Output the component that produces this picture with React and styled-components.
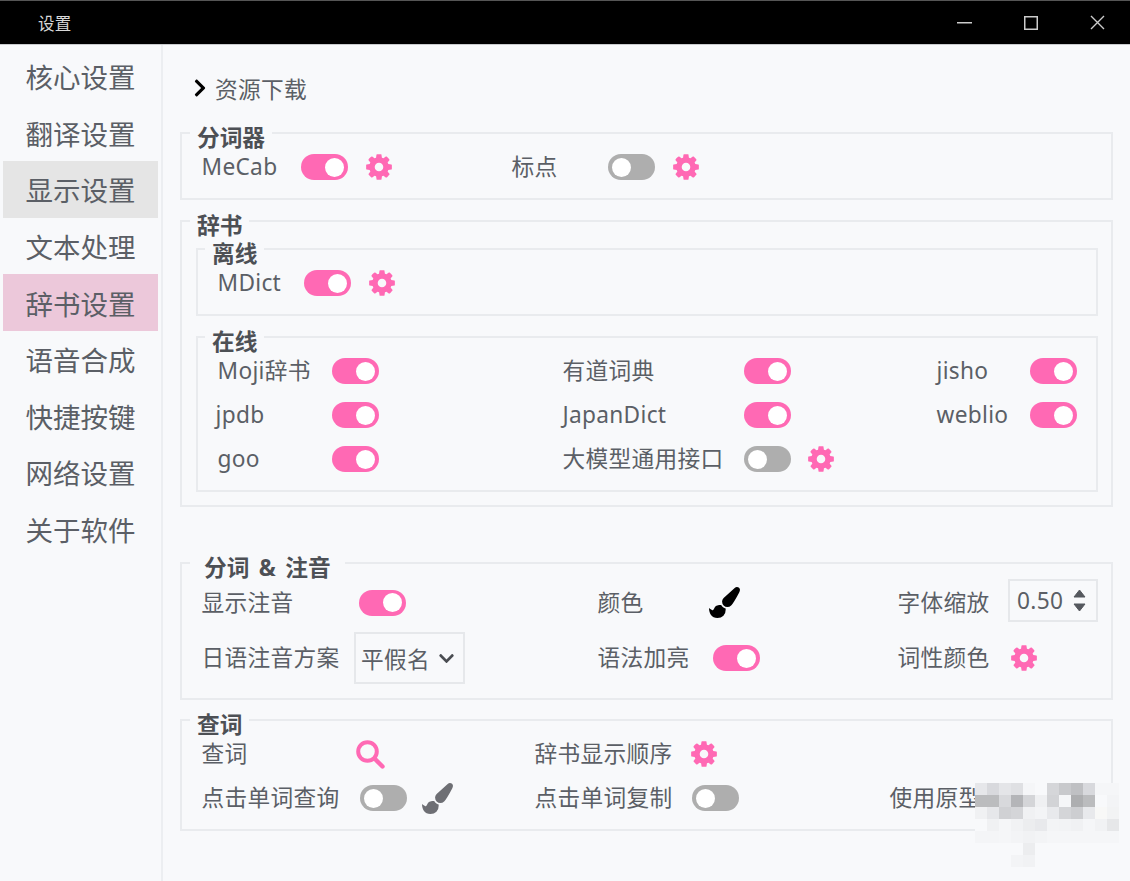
import React from "react";
import styled, { createGlobalStyle } from "styled-components";
import { FaChevronRight, FaChevronDown } from "react-icons/fa";

const Global = createGlobalStyle`
  html, body { margin: 0; padding: 0; background: #f8f9fb; }
  * { box-sizing: border-box; }
`;

const Window = styled.div`
  position: relative;
  width: 1130px;
  height: 881px;
  overflow: hidden;
  display: flex;
  flex-direction: column;
  background: #f8f9fb;
  color: #5b5f66;
  font-family: "Noto Sans", "Noto Sans CJK SC", sans-serif;
  font-size: 22.7px;
  letter-spacing: 0.3px;
`;

const TitleBar = styled.header`
  height: 45px;
  flex: none;
  display: flex;
  align-items: center;
  background: #000;
  border-top: 1px solid #555;
  border-bottom: 1px solid #c9cbce;
  padding-left: 38px;
  color: #d8d8d8;
  font-size: 16.5px;
`;

const TitleText = styled.span`
  flex: 1;
`;

const WinButton = styled.button`
  width: 66.5px;
  height: 42px;
  padding: 0 0 0 2px;
  border: 0;
  background: transparent;
  display: flex;
  align-items: center;
  justify-content: center;
  svg { display: block; }
`;

const Body = styled.div`
  flex: 1;
  display: flex;
  min-height: 0;
`;

const Sidebar = styled.nav`
  width: 163px;
  flex: none;
  padding: 3px 3px 0 3px;
  border-right: 2px solid #eceef1;
`;

const NavItem = styled.div`
  height: 56.6px;
  display: flex;
  align-items: center;
  justify-content: center;
  font-size: 27.5px;
  letter-spacing: 0;
  background: ${(p) => (p.$state === "hover" ? "#e5e5e5" : p.$state === "active" ? "#ecc8da" : "transparent")};
`;

const Content = styled.main`
  flex: 1;
  padding: 28px 17px 0 17px;
`;

const Download = styled.div`
  height: 30px;
  display: flex;
  align-items: center;
  gap: 5px;
  padding-left: 10px;
  margin-bottom: 20px;
  svg { color: #000; font-size: 20px; }
`;

const Group = styled.fieldset`
  margin: ${(p) => p.$mt ?? 0}px 0 0;
  padding: ${(p) => p.$pad || "8px 0 15px 20px"};
  border: 2px solid #e9ebee;
  min-width: 0;
`;

const Legend = styled.legend`
  margin-left: ${(p) => p.$ml ?? -12}px;
  padding: 0 ${(p) => p.$px ?? 7}px;
  line-height: 20px;
  height: 20px;
  font-weight: 700;
  letter-spacing: 0;
  color: #4d5055;
  transform: translateY(5px);
  white-space: nowrap;
  word-spacing: 3.5px;
`;

const Nested = styled(Group)`
  & + & { margin-top: 11px; }
`;

const Grid = styled.div`
  display: grid;
  grid-template-columns: ${(p) => p.$cols};
  grid-auto-rows: ${(p) => p.$rows || "32px"};
  grid-template-rows: ${(p) => p.$rows || "none"};
  row-gap: ${(p) => p.$gap ?? 12}px;
  align-items: center;
`;

const Label = styled.span`
  white-space: nowrap;
  margin-left: ${(p) => p.$ml ?? -0.5}px;
  line-height: 32px;
`;

const Toggle = styled.span`
  width: 47px;
  height: 26px;
  border-radius: 13px;
  display: flex;
  align-items: center;
  justify-content: ${(p) => (p.$on ? "flex-end" : "flex-start")};
  padding: 0 4px;
  margin-left: ${(p) => p.$ml ?? 0}px;
  background: ${(p) => (p.$on ? "#ff69b4" : "#aeaeae")};
  &::after {
    content: "";
    width: 19px;
    height: 19px;
    border-radius: 50%;
    background: #fff;
  }
`;

const IconSvg = styled.svg`
  display: block;
  margin-left: ${(p) => p.$ml ?? 0}px;
  fill: ${(p) => p.$color || "#ff69b4"};
`;

const GEAR =
  "M1152 896q0-106-75-181t-181-75-181 75-75 181 75 181 181 75 181-75 75-181zm512-109v222q0 12-8 23t-20 13l-185 28q-19 54-39 91 35 50 107 138 10 12 10 25t-9 23q-27 37-99 108t-94 71q-12 0-26-9l-138-108q-44 23-91 38-16 136-29 186-7 28-36 28h-222q-14 0-24.5-8.5t-11.5-21.5l-28-184q-49-16-90-37l-141 107q-10 9-25 9-14 0-25-11-126-114-165-168-7-10-7-23 0-12 8-23 15-21 51-66.5t54-70.5q-27-50-41-99l-183-27q-13-2-21-12.5t-8-23.5v-222q0-12 8-23t19-13l186-28q14-46 39-92-40-57-107-138-10-12-10-24 0-10 9-23 26-36 98.5-107.5t94.5-71.5q13 0 26 10l138 107q44-23 91-38 16-136 29-186 7-28 36-28h222q14 0 24.5 8.5t11.5 21.5l28 184q49 16 90 37l142-107q9-9 24-9 13 0 25 10 129 119 165 170 7 8 7 22 0 12-8 23-15 21-51 66.5t-54 70.5q26 50 41 98l183 28q13 2 21 12.5t8 23.5z";

const BRUSH =
  "M1615 0q70 0 122.5 46.5t52.5 116.5q0 63-45 151-332 629-465 752-97 91-218 91-126 0-216.5-92.5t-90.5-219.5q0-128 92-212l638-579q59-54 130-54zm-909 1034q39 76 106.5 130t150.5 76l1 71q4 213-129.5 347t-348.5 134q-123 0-218-46.5t-152.5-127.5-86.5-183-29-220q7 5 41 30t62 44.5 59 36.5 46 17q41 0 55-37 25-66 57.5-112.5t69.5-76 88-47.5 103-25.5 125-10.5z";

const Gear = ({ ml }) => (
  <IconSvg $ml={ml} width="30" height="30" viewBox="0 0 1792 1792">
    <path d={GEAR} />
  </IconSvg>
);

const Brush = ({ ml, color }) => (
  <IconSvg $ml={ml} $color={color} width="31" height="31" viewBox="0 0 1792 1792">
    <path d={BRUSH} />
  </IconSvg>
);

const SearchSvg = styled.svg`
  display: block;
  margin-left: -4px;
  fill: none;
  stroke: #ff69b4;
  stroke-linecap: round;
`;

const Box = styled.div`
  border: 2px solid #e6e8eb;
  display: flex;
  align-items: center;
`;

const SpinBox = styled(Box)`
  width: 90px;
  height: 43px;
  padding: 0 10px 0 7px;
  justify-content: space-between;
  align-self: start;
`;

const SpinArrows = styled.svg`
  display: block;
  fill: #55585e;
  stroke: #55585e;
  stroke-linejoin: round;
`;

const SelectBox = styled(Box)`
  width: 111px;
  height: 52px;
  padding: 0 8px 0 5px;
  justify-content: space-between;
  svg { font-size: 17px; color: #4a4d52; }
`;

const Mosaic = styled.svg`
  position: absolute;
  left: 975px;
  top: 783px;
`;

const mosaicRows = [
  ["e6e7ea", "d8d9dd", "e4e5e8", "dfe0e3", "f5f6f8", "f8f9fb", "d5d6d9", "c8c9cc", "bfc0c3", "d8d9dd", "f5f6f8", "f5f6f8"],
  ["bbbcbe", "bbbcbe", "d8d9dc", "b4b5b8", "d4d5d8", "eff0f2", "d2d3d6", "f5f6f8", "adaeb0", "bbbcbe", "f8f9fb", "f3f4f6"],
  ["f0f1f3", "e6e7ea", "d0d1d4", "d4d5d8", "f0f1f3", "f3f4f6", "e8e9ec", "d4d5d8", "cdced1", "e8e9ec", "f8f8f7", "f2f3f4"],
  ["f8f9fb", "f0f1f3", "f5f6f8", "f1f2f4", "ecedef", "e8e9ec", "f3f4f6", "f2f3f5", "f0f1f3", "f5f6f8", "f1f2f4", "e6e7e9"],
  ["f4f5f7", "f4f5f7", "f5f6f8", "f3f4f6", "f1f2f4", "f3f4f6", "f5f6f8", "f5f6f8", "f5f6f8", "f5f6f8", "f5f6f8", "f5f6f8"],
  [null, null, null, null, "ecedef"],
  [null, null, null, "f3f4f6", "f1f2f4"],
];

const nav = [
  ["核心设置"],
  ["翻译设置"],
  ["显示设置", "hover"],
  ["文本处理"],
  ["辞书设置", "active"],
  ["语音合成"],
  ["快捷按键"],
  ["网络设置"],
  ["关于软件"],
];

export default function App() {
  return (
    <Window>
      <Global />
      <TitleBar>
        <TitleText>设置</TitleText>
        <WinButton aria-label="min">
          <svg width="15" height="2"><rect width="15" height="1.5" fill="#ccc" /></svg>
        </WinButton>
        <WinButton aria-label="max">
          <svg width="14" height="14"><rect x=".75" y=".75" width="12.5" height="12.5" fill="none" stroke="#ccc" strokeWidth="1.5" /></svg>
        </WinButton>
        <WinButton aria-label="close">
          <svg width="15" height="15"><path d="M1 1l13 13M14 1L1 14" stroke="#ccc" strokeWidth="1.4" fill="none" /></svg>
        </WinButton>
      </TitleBar>
      <Body>
        <Sidebar>
          {nav.map(([t, s]) => (
            <NavItem key={t} $state={s}>{t}</NavItem>
          ))}
        </Sidebar>
        <Content>
          <Download>
            <FaChevronRight />
            <span>资源下载</span>
          </Download>

          <Group>
            <Legend>分词器</Legend>
            <Grid $cols="99px 47px 164px 96px 47px 60px">
              <Label>MeCab</Label>
              <Toggle $on />
              <Gear ml={16} />
              <Label>标点</Label>
              <Toggle />
              <Gear ml={16} />
            </Grid>
          </Group>

          <Group $mt={11} $pad="0 13px 13px 14px">
            <Legend $ml={-6}>辞书</Legend>
            <Nested $mt={8}>
              <Legend $ml={-13}>离线</Legend>
              <Grid $cols="86px 47px 60px">
                <Label>MDict</Label>
                <Toggle $on />
                <Gear ml={16} />
              </Grid>
            </Nested>
            <Nested>
              <Legend $ml={-13}>在线</Legend>
              <Grid $cols="114px 47px 184px 181px 47px 146px 93px 47px">
                <Label>Moji辞书</Label>
                <Toggle $on />
                <span />
                <Label>有道词典</Label>
                <Toggle $on />
                <span />
                <Label>jisho</Label>
                <Toggle $on />

                <Label $ml={-2.5}>jpdb</Label>
                <Toggle $on />
                <span />
                <Label>JapanDict</Label>
                <Toggle $on />
                <span />
                <Label>weblio</Label>
                <Toggle $on />

                <Label>goo</Label>
                <Toggle $on />
                <span />
                <Label>大模型通用接口</Label>
                <Toggle />
                <Gear ml={15} />
              </Grid>
            </Nested>
          </Group>

          <Group $mt={46} $pad="6px 0 14px 20px">
            <Legend $px={14}>分词 &amp; 注音</Legend>
            <Grid $cols="152px 111px 133px 115px 47px 138px 110px 90px" $rows="47px 52px" $gap={6}>
              <Label>显示注音</Label>
              <Toggle $on $ml={5} />
              <span />
              <Label>颜色</Label>
              <Brush ml={-4} color="#000" />
              <span />
              <Label>字体缩放</Label>
              <SpinBox>
                <span>0.50</span>
                <SpinArrows width="13" height="23" viewBox="0 0 13 23">
                  <path d="M6.5 1L12 8H1zM6.5 22L1 15h11z" />
                </SpinArrows>
              </SpinBox>

              <Label>日语注音方案</Label>
              <SelectBox>
                <span>平假名</span>
                <FaChevronDown />
              </SelectBox>
              <span />
              <Label>语法加亮</Label>
              <Toggle $on />
              <span />
              <Label>词性颜色</Label>
              <Gear ml={1} />
            </Grid>
          </Group>

          <Group $mt={10} $pad="8px 0 15px 20px">
            <Legend>查词</Legend>
            <Grid $cols="158px 47px 128px 157px 47px 151px 160px">
              <Label>查词</Label>
              <SearchSvg width="29" height="29" viewBox="0 0 29 29">
                <circle cx="11.5" cy="11.5" r="9.3" strokeWidth="4" />
                <path d="M18.5 18.5L26.5 26.5" strokeWidth="4.4" />
              </SearchSvg>
              <span />
              <Label>辞书显示顺序</Label>
              <Gear ml={-3} />
              <span />
              <span />

              <Label>点击单词查询</Label>
              <Toggle />
              <Brush ml={15} color="#6e6f74" />
              <Label>点击单词复制</Label>
              <Toggle />
              <span />
              <Label>使用原型查询</Label>
            </Grid>
          </Group>
        </Content>
      </Body>
      <Mosaic width="144" height="84" viewBox="0 0 144 84">
        {mosaicRows.map((row, r) =>
          row.map((c, i) =>
            c ? <rect key={`${r}-${i}`} x={i * 12} y={r * 12} width="12" height="12" fill={`#${c}`} /> : null
          )
        )}
      </Mosaic>
    </Window>
  );
}
